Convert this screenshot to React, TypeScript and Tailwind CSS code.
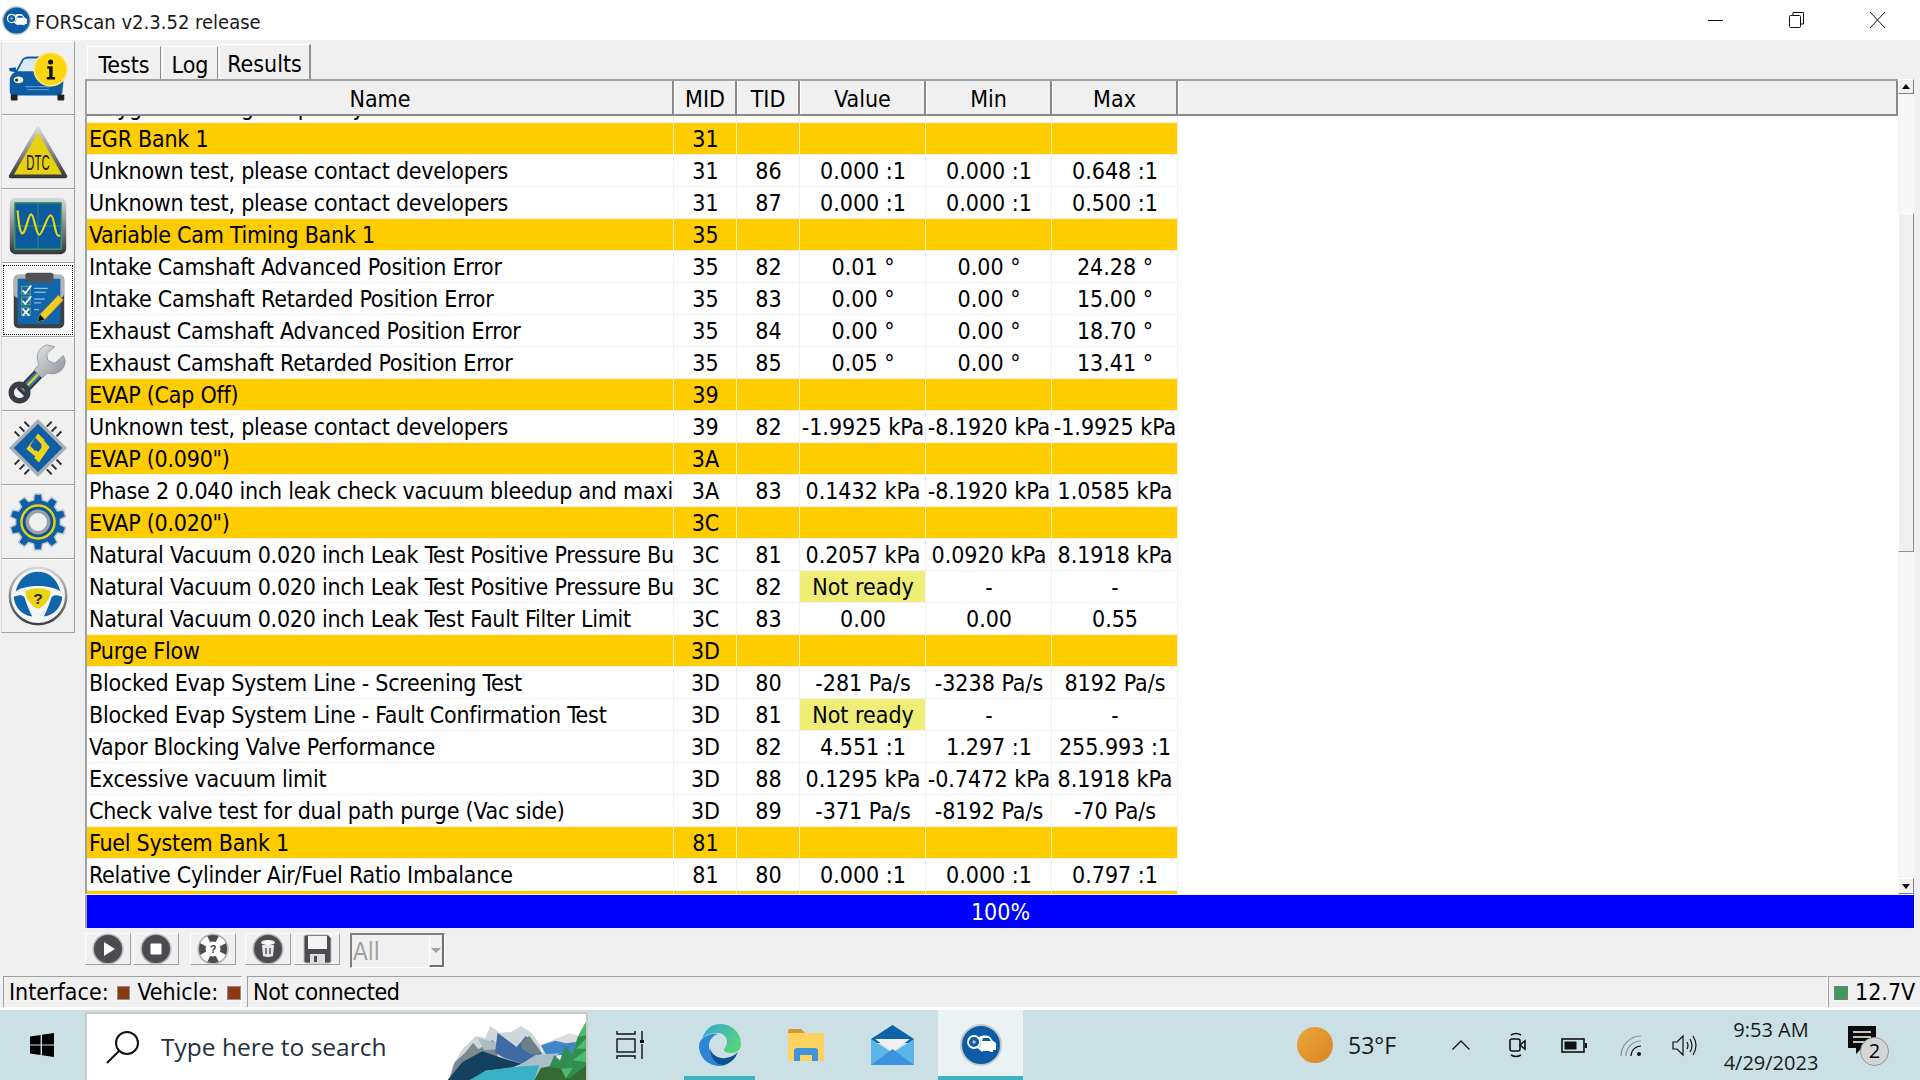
type Row = { name: string; mid: string; tid?: string; value?: string; min?: string; max?: string; group?: boolean }

const data: Row[] = [
  { name: 'Oxygen Sensing Frequency', mid: '', tid: '' },
  { name: 'EGR Bank 1', mid: '31', group: true },
  { name: 'Unknown test, please contact developers', mid: '31', tid: '86', value: '0.000 :1', min: '0.000 :1', max: '0.648 :1' },
  { name: 'Unknown test, please contact developers', mid: '31', tid: '87', value: '0.000 :1', min: '0.000 :1', max: '0.500 :1' },
  { name: 'Variable Cam Timing Bank 1', mid: '35', group: true },
  { name: 'Intake Camshaft Advanced Position Error', mid: '35', tid: '82', value: '0.01 °', min: '0.00 °', max: '24.28 °' },
  { name: 'Intake Camshaft Retarded Position Error', mid: '35', tid: '83', value: '0.00 °', min: '0.00 °', max: '15.00 °' },
  { name: 'Exhaust Camshaft Advanced Position Error', mid: '35', tid: '84', value: '0.00 °', min: '0.00 °', max: '18.70 °' },
  { name: 'Exhaust Camshaft Retarded Position Error', mid: '35', tid: '85', value: '0.05 °', min: '0.00 °', max: '13.41 °' },
  { name: 'EVAP (Cap Off)', mid: '39', group: true },
  { name: 'Unknown test, please contact developers', mid: '39', tid: '82', value: '-1.9925 kPa', min: '-8.1920 kPa', max: '-1.9925 kPa' },
  { name: 'EVAP (0.090")', mid: '3A', group: true },
  { name: 'Phase 2 0.040 inch leak check vacuum bleedup and maximum', mid: '3A', tid: '83', value: '0.1432 kPa', min: '-8.1920 kPa', max: '1.0585 kPa' },
  { name: 'EVAP (0.020")', mid: '3C', group: true },
  { name: 'Natural Vacuum 0.020 inch Leak Test Positive Pressure Build', mid: '3C', tid: '81', value: '0.2057 kPa', min: '0.0920 kPa', max: '8.1918 kPa' },
  { name: 'Natural Vacuum 0.020 inch Leak Test Positive Pressure Build', mid: '3C', tid: '82', value: 'Not ready', min: '-', max: '-' },
  { name: 'Natural Vacuum 0.020 inch Leak Test Fault Filter Limit', mid: '3C', tid: '83', value: '0.00', min: '0.00', max: '0.55' },
  { name: 'Purge Flow', mid: '3D', group: true },
  { name: 'Blocked Evap System Line - Screening Test', mid: '3D', tid: '80', value: '-281 Pa/s', min: '-3238 Pa/s', max: '8192 Pa/s' },
  { name: 'Blocked Evap System Line - Fault Confirmation Test', mid: '3D', tid: '81', value: 'Not ready', min: '-', max: '-' },
  { name: 'Vapor Blocking Valve Performance', mid: '3D', tid: '82', value: '4.551 :1', min: '1.297 :1', max: '255.993 :1' },
  { name: 'Excessive vacuum limit', mid: '3D', tid: '88', value: '0.1295 kPa', min: '-0.7472 kPa', max: '8.1918 kPa' },
  { name: 'Check valve test for dual path purge (Vac side)', mid: '3D', tid: '89', value: '-371 Pa/s', min: '-8192 Pa/s', max: '-70 Pa/s' },
  { name: 'Fuel System Bank 1', mid: '81', group: true },
  { name: 'Relative Cylinder Air/Fuel Ratio Imbalance', mid: '81', tid: '80', value: '0.000 :1', min: '0.000 :1', max: '0.797 :1' },
  { name: '', mid: '', group: true },
]

function gearPath(cx: number, cy: number, ro: number, ri: number, n: number) {
  let d = ''
  const step = (Math.PI * 2) / n
  for (let i = 0; i < n; i++) {
    const a = i * step - Math.PI / 2
    const pts = [
      [ri, a - step * 0.32],
      [ro, a - step * 0.2],
      [ro, a + step * 0.2],
      [ri, a + step * 0.32],
    ]
    pts.forEach(([r, t], j) => {
      d += `${i === 0 && j === 0 ? 'M' : 'L'}${(cx + r * Math.cos(t)).toFixed(1)} ${(cy + r * Math.sin(t)).toFixed(1)}`
    })
  }
  return d + 'Z'
}

function CarInfoIcon() {
  return (
    <svg width="74" height="74" viewBox="0 2 74 74">
      <path d="M14 32 L20 21 Q22 17 28 17 L46 17 L56 30 L62 36 Q63 38 63 44 L62 54 Q61 57 58 57 L12 57 Q8 57 8 53 L8 41 Q8 36 13 33Z" fill="#0c5ba3" />
      <path d="M16 32 L22 21 Q23 19 28 19 L40 19 L40 32Z" fill="#d7e9f5" />
      <path d="M7 29 L14 28 L15 33 L8 32Z" fill="#0c5ba3" />
      <ellipse cx="17" cy="41" rx="5" ry="3.5" fill="#f5f0c8" />
      <circle cx="15" cy="41" r="1.6" fill="#1b2e45" />
      <path d="M24 48 H50 M26 51 H48" stroke="#6ea8d5" strokeWidth="1" />
      <rect x="9" y="56" width="7" height="6" rx="1" fill="#222" />
      <rect x="57" y="56" width="7" height="6" rx="1" fill="#222" />
      <circle cx="50" cy="30" r="17" fill="#fbd50f" stroke="#fde98a" strokeWidth="1.5" />
      <circle cx="50" cy="22.5" r="2.6" fill="#111" />
      <path d="M46.5 27 H52 V38 H54.5 V40.5 H46 V38 H48.5 V29.5 H46.5Z" fill="#111" />
    </svg>
  )
}

function DtcIcon() {
  return (
    <svg width="74" height="74" viewBox="0 0 74 74">
      <defs>
        <linearGradient id="dtcEdge" x1="0" y1="0" x2="0" y2="1">
          <stop offset="0" stopColor="#d8d8d8" />
          <stop offset="1" stopColor="#36363e" />
        </linearGradient>
      </defs>
      <path d="M37 13 L65 62 L9 62Z" fill="#e6d10f" stroke="url(#dtcEdge)" strokeWidth="4" strokeLinejoin="round" />
      <text x="37" y="56" textAnchor="middle" fontSize="23" fontFamily="'Liberation Sans'" fill="#1a1a1a" textLength="24" lengthAdjust="spacingAndGlyphs">DTC</text>
    </svg>
  )
}

function ScopeIcon() {
  return (
    <svg width="74" height="74" viewBox="0 0 74 74">
      <defs>
        <linearGradient id="scopeEdge" x1="0" y1="0" x2="0" y2="1">
          <stop offset="0" stopColor="#d5dbdf" />
          <stop offset="1" stopColor="#33363c" />
        </linearGradient>
      </defs>
      <rect x="8" y="8" width="58" height="58" rx="6" fill="url(#scopeEdge)" />
      <rect x="13" y="13" width="48" height="48" rx="1" fill="#0d5b9f" stroke="#3e9a63" strokeWidth="1.5" />
      <path d="M37 13 V61 M13 37 H61" stroke="#3e9a63" strokeWidth="0.8" />
      <path d="M16 21 C18 44 20 46 22 44 C26 38 27 25 30 25 C33 25 35 46 38 46 C42 46 46 26 50 26 C54 26 54 47 58 47 L60 47" fill="none" stroke="#e8d711" strokeWidth="2.2" />
    </svg>
  )
}

function ClipboardIcon() {
  return (
    <svg width="70" height="70" viewBox="0 0 70 70">
      <rect x="10" y="9" width="52" height="55" rx="5" fill="#3d4045" />
      <rect x="10" y="9" width="52" height="24" rx="5" fill="#aeb4b8" />
      <rect x="14" y="13" width="44" height="47" rx="1" fill="#0f66ad" />
      <rect x="22" y="7" width="29" height="10" rx="3" fill="#505256" />
      <rect x="18" y="21" width="9" height="8" fill="none" stroke="#6fa86b" strokeWidth="1" />
      <rect x="18" y="32" width="9" height="8" fill="none" stroke="#6fa86b" strokeWidth="1" />
      <rect x="18" y="43" width="9" height="8" fill="none" stroke="#6fa86b" strokeWidth="1" />
      <path d="M19 25 L22 28 L28 20 M19 36 L22 39 L28 31" fill="none" stroke="#fff" strokeWidth="1.8" />
      <path d="M19 44 L26 51 M26 44 L19 51" stroke="#fff" strokeWidth="1.8" />
      <path d="M31 23 H45 M31 27 H43 M31 34 H42 M31 38 H38 M31 45 H36" stroke="#b8d6ee" strokeWidth="1" />
      <path d="M37 50 L56 30 L61 35 L42 55 L35 57Z" fill="#f0cd22" stroke="#c79a10" strokeWidth="0.8" />
      <path d="M35 57 L37 50 L42 55Z" fill="#111" />
    </svg>
  )
}

function WrenchIcon() {
  return (
    <svg width="74" height="74" viewBox="0 0 74 74">
      <defs>
        <linearGradient id="wrenchHead" x1="0" y1="0" x2="1" y2="1">
          <stop offset="0" stopColor="#e6e8ea" />
          <stop offset="1" stopColor="#8b8f94" />
        </linearGradient>
      </defs>
      <path d="M19 56 L45 29" stroke="#33363b" strokeWidth="11" />
      <path d="M21 54 L44 30" stroke="#2a78bd" strokeWidth="7" />
      <path d="M22 53 L44 30" stroke="#e6cf1a" strokeWidth="2.5" />
      <circle cx="18" cy="56" r="8.5" fill="none" stroke="#3a3d42" strokeWidth="5.5" />
      <path d="M46 7 C37 10 34 19 38 27 L33 33 L41 41 L47 36 C56 39 65 33 65 23 L63 18 L54 26 L47 23 L46 16 L54 9Z" fill="url(#wrenchHead)" stroke="#8a8e93" strokeWidth="0.8" />
    </svg>
  )
}

function ChipIcon() {
  const ticks = [
    [18, 25, 13, 20], [23, 20, 18, 15], [28, 15, 23, 10],
    [46, 15, 51, 10], [51, 20, 56, 15], [56, 25, 61, 20],
    [18, 49, 13, 54], [23, 54, 18, 59], [28, 59, 23, 64],
    [46, 59, 51, 64], [51, 54, 56, 59], [56, 49, 61, 54],
  ]
  return (
    <svg width="74" height="74" viewBox="0 0 74 74">
      {ticks.map((t, i) => (
        <line key={i} x1={t[0]} y1={t[1]} x2={t[2]} y2={t[3]} stroke="#2c2e33" strokeWidth="2" />
      ))}
      <path d="M37 7 L67 37 L37 67 L7 37Z" fill="#a8adb2" stroke="#d8dadc" strokeWidth="1" strokeLinejoin="round" />
      <path d="M37 12 L62 37 L37 62 L12 37Z" fill="#0f5fa6" />
      <path d="M37 22 L44 29 L33 38 L40 43 L36 47 L25 38Z" fill="#efd21a" />
      <path d="M40 26 L49 36 L38 52 L33 47 L41 36 L36 30Z" fill="#efd21a" />
      <path d="M34 26 L41 34 L34 40 L29 35Z" fill="#0f5fa6" />
    </svg>
  )
}

function GearIcon() {
  return (
    <svg width="74" height="74" viewBox="0 0 74 74">
      <path d={gearPath(37, 37, 29, 23, 10)} fill="#0f5fa6" stroke="#b9c6d0" strokeWidth="1.5" strokeLinejoin="round" />
      <circle cx="37" cy="37" r="17" fill="#0d5596" stroke="#e8d015" strokeWidth="2.5" />
      <circle cx="37" cy="37" r="11" fill="#f0f0f0" stroke="#9ba0a5" strokeWidth="3.5" />
    </svg>
  )
}

function WheelIcon() {
  return (
    <svg width="74" height="74" viewBox="0 0 74 74">
      <defs>
        <linearGradient id="wheelRing" x1="0" y1="0" x2="0" y2="1">
          <stop offset="0" stopColor="#d3d6d9" />
          <stop offset="1" stopColor="#3b3e44" />
        </linearGradient>
      </defs>
      <circle cx="37" cy="37" r="29" fill="#f4f4f4" stroke="url(#wheelRing)" strokeWidth="2.5" />
      <path d="M14 32 C18 17 28 12 37 12 C46 12 56 17 60 32 C48 25 26 25 14 32Z" fill="#0f66ad" />
      <path d="M12 38 C16 36 20 35 23 38 C25 44 27 50 31 58 C20 57 13 48 12 38Z" fill="#0f66ad" />
      <path d="M62 38 C58 36 54 35 51 38 C49 44 47 50 43 58 C54 57 61 48 62 38Z" fill="#0f66ad" />
      <path d="M24 32 C30 28 44 28 50 32 C50 40 44 47 37 50 C30 47 24 40 24 32Z" fill="#ecd40f" />
      <text x="37" y="45" textAnchor="middle" fontSize="16" fontWeight="700" fontFamily="'Liberation Sans'" fill="#222">?</text>
    </svg>
  )
}

function ForscanIcon({ size }: { size: number }) {
  return (
    <svg width={size} height={size} viewBox="0 0 42 42">
      <circle cx="21" cy="21" r="20" fill="#0c5ca6" stroke="#c4c8cb" strokeWidth="2" />
      <circle cx="14" cy="18" r="6" fill="none" stroke="#fff" strokeWidth="1.8" />
      <path d="M18 23 L23 27" stroke="#fff" strokeWidth="2.4" />
      <path d="M19 13 C22 11 28 11 30 13 L33 17 L36 19 V26 H33 V28 H30 V27 H23 L20 23 L21 18Z" fill="#fff" />
      <path d="M23 14 H29 L31 17 H22Z" fill="#0c5ca6" />
      <path d="M14 16 V20 M12 18 H16" stroke="#cde3f5" strokeWidth="1" />
    </svg>
  )
}

function DiscIcon({ children }: { children: React.ReactNode }) {
  return (
    <svg width="32" height="32" viewBox="0 0 32 32">
      <circle cx="16" cy="16" r="14.8" fill="#4b4c50" stroke="#b5b8ba" strokeWidth="1.6" />
      {children}
    </svg>
  )
}

function ToolButton({ children, className }: { children: React.ReactNode; className: string }) {
  return (
    <div className={`w-[46px] h-[32px] flex items-center justify-center border-t border-l border-t-white border-l-white border-r border-b border-r-[#a0a0a0] border-b-[#a0a0a0] ${className}`}>
      {children}
    </div>
  )
}

function SideButton({ children, active }: { children: React.ReactNode; active?: boolean }) {
  return (
    <div className={`w-[74px] h-[74px] flex items-center justify-center border-t border-l border-t-white border-l-[#dcdcdc] border-r border-b border-r-[#a0a0a0] border-b-[#a0a0a0] ${active ? 'bg-white' : ''}`}>
      {active ? (
        <div className="w-[70px] h-[70px] border border-dotted border-black flex items-center justify-center">{children}</div>
      ) : (
        children
      )}
    </div>
  )
}

function Tab({ label, width, active }: { label: string; width: string; active?: boolean }) {
  return (
    <div className={`${width} flex items-center justify-center border-t border-l border-t-white border-l-white border-r border-r-[#909090] ${active ? 'h-[35px] border-r-2 pt-[4px]' : 'h-[33px] pt-[5px]'}`}>
      {label}
    </div>
  )
}

function HeadCell({ label, width }: { label: string; width: string }) {
  return (
    <div className={`${width} h-full flex items-center justify-center pt-[3px] border-l border-l-white border-r-2 border-r-[#8a8a8a]`}>{label}</div>
  )
}

function TableRow({ row }: { row: Row }) {
  const bg = row.group ? 'bg-[#ffcc00]' : 'bg-white'
  const sep = row.group ? 'border-r-[#fff2c0]' : 'border-r-[#f0f0f0]'
  const cell = `h-full flex items-center justify-center pt-[1px] pl-[1px] whitespace-nowrap overflow-hidden border-r ${sep}`
  const notReady = row.value === 'Not ready'
  return (
    <div className={`flex h-[32px] w-[1091px] border-b border-b-[#f0f0f0] ${bg}`}>
      <div className={`w-[587px] h-full flex items-center pl-[2px] pt-[1px] tracking-[-0.24px] whitespace-nowrap overflow-hidden border-r ${sep}`}>{row.name}</div>
      <div className={`${cell} w-[63px]`}>{row.mid}</div>
      <div className={`${cell} w-[63px]`}>{row.tid}</div>
      <div className={`${cell} w-[126px] ${notReady ? 'bg-[#eeee77]' : ''}`}>{row.value}</div>
      <div className={`${cell} w-[126px]`}>{row.min}</div>
      <div className={`${cell} w-[126px]`}>{row.max}</div>
    </div>
  )
}

function Scrollbar() {
  return (
    <div className="w-[16px] flex flex-col bg-[#f7f7f7]">
      <div className="h-[15px] flex items-center justify-center bg-[#f0f0f0] border-t border-l border-t-white border-l-white border-r border-b border-r-[#808080] border-b-[#808080]">
        <div className="w-0 h-0 border-l-[4px] border-r-[4px] border-b-[5px] border-l-transparent border-r-transparent border-b-black" />
      </div>
      <div className="h-[119px]" />
      <div className="h-[339px] bg-[#f0f0f0] border-t border-l border-t-white border-l-white border-r border-b border-r-[#909090] border-b-[#909090]" />
      <div className="flex-1" />
      <div className="h-[16px] flex items-center justify-center bg-[#f0f0f0] border-t border-l border-t-white border-l-white border-r border-b border-r-[#808080] border-b-[#808080]">
        <div className="w-0 h-0 border-l-[4px] border-r-[4px] border-t-[5px] border-l-transparent border-r-transparent border-t-black" />
      </div>
    </div>
  )
}

function Mountains() {
  return (
    <svg className="w-[157px] h-[66px]" viewBox="0 6 470 198" preserveAspectRatio="none">
      <path d="M60 205 L72 158 L100 112 L140 72 L168 78 L184 42 L212 62 L245 60 L276 42 L306 62 L334 100 L340 205Z" fill="#cfd6d9" />
      <path d="M335 100 L380 80 L420 64 L450 72 L470 100 L470 140 L340 130Z" fill="#dcdcdc" />
      <path d="M335 100 L378 86 L410 94 L440 90 L430 130 L350 128Z" fill="#3f86c8" />
      <path d="M60 205 L76 152 L110 120 L132 92 L148 112 L190 84 L205 100 L205 140 L130 205Z" fill="#7c8a90" />
      <path d="M145 78 L205 92 L205 112 L165 115Z" fill="#aabcc6" />
      <path d="M205 62 L262 105 L275 90 L290 72 L340 126 L280 155 L225 138 L198 122Z" fill="#3f6aa3" />
      <path d="M275 90 L300 72 L338 122 L310 128 L280 112Z" fill="#6d8088" />
      <path d="M55 205 L100 150 L160 118 L225 140 L278 155 L245 168 L170 176 L125 205Z" fill="#14405f" />
      <path d="M270 160 L320 128 L390 124 L360 165 L320 205 L250 205Z" fill="#a9bec9" />
      <path d="M120 205 L170 176 L260 164 L330 160 L315 205Z" fill="#38b0c6" />
      <path d="M315 205 L335 168 L375 160 L470 150 L470 205Z" fill="#346b35" />
      <path d="M360 165 L375 130 L392 145 L410 100 L428 130 L445 75 L470 30 L470 160 L420 200 L395 170Z" fill="#2f8e50" />
      <path d="M445 75 L470 30 L470 70Z M440 110 L470 80 L470 110Z M430 145 L470 115 L470 150Z M395 170 L430 168 L410 200Z" fill="#4cbb6c" />
    </svg>
  )
}

function EdgeIcon() {
  return (
    <svg width="42" height="42" viewBox="0 0 42 42">
      <defs>
        <linearGradient id="edgeTop" x1="0" y1="0" x2="1" y2="0.6">
          <stop offset="0" stopColor="#35a8d6" />
          <stop offset="1" stopColor="#56d27c" />
        </linearGradient>
      </defs>
      <path d="M3 15 C6 5 13 0 21 0 C33 0 42 9 42 20 C42 26 38 29 32 29 C28 29 25 28 25 26 C25 24 28 22 28 18 C28 13 24 9 19 9 C12 9 6 11 3 15Z" fill="url(#edgeTop)" />
      <path d="M3 15 C7 11 14 9 19 10 C12 12 8 19 11 27 C14 36 23 41 30 39 C27 41 24 42 21 42 C9 42 0 33 0 22 C0 19 1 17 3 15Z" fill="#2b86d9" />
      <path d="M11 24 C13 33 23 36 31 33 C34 32 37 30 39 28 C36 36 29 41 23 41 C16 40 11 33 11 24Z" fill="#11508f" />
    </svg>
  )
}

function FolderIcon() {
  return (
    <svg width="36" height="33" viewBox="0 0 36 33">
      <path d="M0 2 Q0 0 2 0 H13 L17 4 V6 H0Z" fill="#d8962e" />
      <rect x="0" y="4" width="36" height="28" rx="1" fill="#fdd25e" />
      <path d="M6 32 V22 Q6 19 9 19 H27 Q30 19 30 22 V32 H24 V26 H12 V32Z" fill="#3f92dc" />
    </svg>
  )
}

function MailIcon() {
  return (
    <svg width="43" height="40" viewBox="0 0 43 40">
      <path d="M0 14 L21.5 0 L43 14 V18 H0Z" fill="#0d63a8" />
      <path d="M4 14 H39 L21.5 27Z" fill="#f0f0f0" />
      <path d="M0 14 L21.5 28 L43 14 V40 H0Z" fill="#5bb5e8" />
      <path d="M0 40 L21.5 24 L43 40Z" fill="#3a93dc" />
    </svg>
  )
}

export default function App() {
  return (
    <div className="w-[1920px] h-[1080px] overflow-hidden flex flex-col bg-[#f0f0f0] text-black text-[23px] font-['DejaVu_Sans_Condensed','Noto_Sans',sans-serif]">
      {/* Title bar */}
      <div className="h-[40px] bg-white flex items-center pl-[2px] relative">
        <ForscanIcon size={29} />
        <span className="ml-[4px] pt-[4px] text-[20px] text-[#1a1a1a]">FORScan v2.3.52 release</span>
        <div className="ml-auto flex items-center gap-[66px] pr-[35px]">
          <svg width="15" height="15" viewBox="0 0 15 15"><path d="M0 7.5 H15" stroke="#111" strokeWidth="1" /></svg>
          <svg width="15" height="16" viewBox="0 0 15 16" fill="none" stroke="#111" strokeWidth="1"><rect x="0.5" y="3.5" width="11" height="12" rx="1" /><path d="M4 3 V0.5 H14.5 V12 H12" /></svg>
          <svg width="15" height="16" viewBox="0 0 15 16" stroke="#111" strokeWidth="1"><path d="M0 0 L15 16 M15 0 L0 16" /></svg>
        </div>
      </div>

      {/* Main area */}
      <div className="h-[936px] flex">
        <div className="w-[75px] pl-[1px] pt-[1px] flex flex-col">
          <SideButton><CarInfoIcon /></SideButton>
          <SideButton><DtcIcon /></SideButton>
          <SideButton><ScopeIcon /></SideButton>
          <SideButton active><ClipboardIcon /></SideButton>
          <SideButton><WrenchIcon /></SideButton>
          <SideButton><ChipIcon /></SideButton>
          <SideButton><GearIcon /></SideButton>
          <SideButton><WheelIcon /></SideButton>
        </div>

        <div className="flex-1 pl-[10px] pr-[6px] flex flex-col">
          <div className="h-[39px] flex items-end pl-[2px] gap-[1px]">
            <Tab label="Tests" width="w-[74px]" />
            <Tab label="Log" width="w-[56px]" />
            <Tab label="Results" width="w-[92px]" active />
          </div>

          <div className="h-[815px] flex">
            <div className="flex-1 min-w-0 flex flex-col border-l-2 border-l-[#a0a0a0]">
              <div className="h-[37px] flex border-t-2 border-t-[#a0a0a0] border-b-2 border-b-[#8a8a8a]">
                <HeadCell label="Name" width="w-[587px]" />
                <HeadCell label="MID" width="w-[63px]" />
                <HeadCell label="TID" width="w-[63px]" />
                <HeadCell label="Value" width="w-[126px]" />
                <HeadCell label="Min" width="w-[126px]" />
                <HeadCell label="Max" width="w-[126px]" />
                <div className="flex-1 h-full border-l border-l-white border-r-2 border-r-[#8a8a8a]" />
              </div>
              <div className="flex-1 min-h-0 overflow-hidden bg-white">
                <div className="-mt-[25px]">
                  {data.map((row, i) => (
                    <TableRow key={i} row={row} />
                  ))}
                </div>
              </div>
            </div>
            <Scrollbar />
          </div>

          <div className="mt-[1px] h-[33px] pt-[2px] bg-[#0000ff] border-l-2 border-l-[#a0a0a0] flex items-center justify-center text-white">100%</div>

          <div className="mt-[5px] h-[35px] flex items-start">
            <ToolButton className="mr-[2px]">
              <DiscIcon><path d="M12 9 L23 16 L12 23Z" fill="#fff" /></DiscIcon>
            </ToolButton>
            <ToolButton className="mr-[11px]">
              <DiscIcon><rect x="10.5" y="10.5" width="11" height="11" rx="1" fill="#fff" /></DiscIcon>
            </ToolButton>
            <ToolButton className="mr-[9px]">
              <DiscIcon>
                <path d="M16 2 A14 14 0 0 1 21 3 L19 9 H13 L11 3 A14 14 0 0 1 16 2Z M16 30 A14 14 0 0 1 11 29 L13 23 H19 L21 29 A14 14 0 0 1 16 30Z" fill="#fff" transform="rotate(45 16 16)" />
                <path d="M16 2 A14 14 0 0 1 21 3 L19 9 H13 L11 3 A14 14 0 0 1 16 2Z M16 30 A14 14 0 0 1 11 29 L13 23 H19 L21 29 A14 14 0 0 1 16 30Z" fill="#fff" transform="rotate(-45 16 16)" />
                <circle cx="16" cy="16" r="7.5" fill="#fff" />
                <text x="16" y="20" textAnchor="middle" fontSize="11" fontWeight="700" fontFamily="'Liberation Sans'" fill="#333">?</text>
              </DiscIcon>
            </ToolButton>
            <ToolButton className="mr-[3px]">
              <DiscIcon>
                <ellipse cx="16" cy="9.5" rx="7" ry="2.5" fill="#fff" />
                <path d="M10 12 H22 L21 23 Q16 25 11 23Z" fill="#e8e8e8" />
                <path d="M14 15 V21 M18 15 V21" stroke="#4b4c50" strokeWidth="1.4" />
              </DiscIcon>
            </ToolButton>
            <ToolButton className="mr-[10px]">
              <svg width="29" height="30" viewBox="0 0 29 30">
                <path d="M1 3 Q1 1 3 1 H25 L28 4 V27 Q28 29 26 29 H3 Q1 29 1 27Z" fill="#4b4c50" stroke="#b5b8ba" strokeWidth="1" />
                <rect x="5" y="2" width="19" height="13" fill="#f4f4f4" />
                <rect x="7" y="20" width="15" height="9" fill="#dcdcdc" />
                <rect x="11" y="22" width="3" height="6" fill="#4b4c50" />
              </svg>
            </ToolButton>
            <div className="w-[95px] h-[35px] flex items-stretch border-t-2 border-l-2 border-t-[#808080] border-l-[#808080] border-b border-r border-b-white border-r-white">
              <div className="flex-1 pl-[1px] pt-[2px] flex items-center text-[#a0a0a0] text-[24px]">All</div>
              <div className="w-[15px] flex items-center justify-center border-l border-l-white border-r-2 border-b-2 border-r-[#707070] border-b-[#707070]">
                <div className="w-0 h-0 border-l-[5px] border-r-[5px] border-t-[5px] border-l-transparent border-r-transparent border-t-[#a0a0a0]" />
              </div>
            </div>
          </div>
        </div>
      </div>

      {/* Status bar */}
      <div className="h-[31px] flex pl-[3px]">
        <div className="w-[239px] flex items-center pl-[5px] pt-[1px] border-t border-l border-t-[#a0a0a0] border-l-[#a0a0a0] border-r border-r-white">
          <span>Interface:</span>
          <span className="w-[14px] h-[14px] ml-[8px] bg-[#8b3a0f] border border-[#8c8c8c]" />
          <span className="ml-[7px]">Vehicle:</span>
          <span className="w-[14px] h-[14px] ml-[9px] bg-[#8b3a0f] border border-[#8c8c8c]" />
        </div>
        <div className="ml-[5px] flex-1 flex items-center pl-[5px] pt-[1px] tracking-[-0.35px] border-t border-l border-t-[#a0a0a0] border-l-[#a0a0a0] border-r border-r-white">Not connected</div>
        <div className="w-[92px] flex items-center pl-[5px] pt-[1px] border-t border-l border-t-[#a0a0a0] border-l-[#a0a0a0]">
          <span className="w-[14px] h-[14px] bg-[#3c9b5a] border border-[#7c7c7c]" />
          <span className="ml-[7px]">12.7V</span>
        </div>
      </div>
      <div className="h-[3px] bg-white" />

      {/* Taskbar */}
      <div className="h-[70px] bg-[#cbe0e5] flex items-stretch font-['Open_Sans',sans-serif]">
        <div className="w-[85px] flex items-center justify-center pr-[2px]">
          <svg width="24" height="24" viewBox="0 0 24 24" fill="#000">
            <path d="M0 3.6 L10.6 2 V11.4 H0Z M12 1.8 L24 0 V11.4 H12Z M0 12.6 H10.6 V22 L0 20.4Z M12 12.6 H24 V24 L12 22.2Z" />
          </svg>
        </div>
        <div className="w-[503px] my-[2px] -mb-[2px] bg-white border-2 border-[#c8c8c8] flex items-center overflow-hidden">
          <svg className="ml-[19px]" width="34" height="34" viewBox="0 0 34 34" fill="none" stroke="#111" strokeWidth="2">
            <circle cx="21" cy="13" r="11" />
            <path d="M13 21 L1 33" />
          </svg>
          <span className="ml-[21px] text-[24.5px] text-[#1f3040] whitespace-nowrap">Type here to search</span>
          <div className="ml-auto flex items-end h-full"><Mountains /></div>
        </div>

        <div className="w-[28px] ml-[28px] flex items-center">
          <svg width="28" height="28" viewBox="0 0 28 28" fill="none" stroke="#111" strokeWidth="1.4">
            <path d="M1 0 V3 H19 V0" />
            <rect x="1" y="8" width="18" height="13" />
            <path d="M1 28 V25 H19 V28" />
            <path d="M26 0 V9 M26 13 V28" />
            <rect x="24" y="9" width="4" height="3" fill="#111" stroke="none" />
          </svg>
        </div>
        <div className="w-[71px] ml-[40px] flex items-center justify-center border-b-4 border-b-[#3ab4c1] pt-[4px]"><EdgeIcon /></div>
        <div className="ml-[33px] flex items-center w-[36px]"><FolderIcon /></div>
        <div className="ml-[47px] flex items-center w-[43px]"><MailIcon /></div>
        <div className="ml-[24px] w-[85px] bg-[#eaf2f4] border-b-4 border-b-[#3ab4c1] flex items-center justify-center pt-[4px]"><ForscanIcon size={42} /></div>

        <div className="ml-auto flex items-center relative">
          <div className="w-[36px] h-[36px] rounded-full bg-gradient-to-br from-[#eaa63a] to-[#d98526]" />
          <span className="ml-[15px] w-[50px] text-[23px] text-[#1a1a1a] whitespace-nowrap">53°F</span>
          <svg className="ml-[54px]" width="18" height="10" viewBox="0 0 18 10" fill="none" stroke="#111" strokeWidth="1.3"><path d="M0.5 9.5 L9 1 L17.5 9.5" /></svg>
          <svg className="ml-[38px]" width="19" height="26" viewBox="0 0 19 26" fill="none" stroke="#111" strokeWidth="1.6">
            <rect x="2" y="7" width="10" height="12" rx="2" />
            <path d="M12 13 L17 9 V17Z" />
            <path d="M3 3 Q8 0 13 3 M3 23 Q8 26 13 23" />
          </svg>
          <svg className="ml-[34px]" width="26" height="15" viewBox="0 0 26 15">
            <rect x="1" y="1" width="22" height="13" fill="none" stroke="#111" strokeWidth="1.6" />
            <rect x="3.5" y="3.5" width="12" height="8" fill="#111" />
            <rect x="24" y="5" width="2" height="5" fill="#111" />
          </svg>
          <svg className="ml-[33px]" width="21" height="21" viewBox="0 0 21 21" fill="none" strokeWidth="1.2">
            <path d="M1 21 A20 20 0 0 1 21 1" stroke="#8a8f92" />
            <path d="M6 21 A15 15 0 0 1 21 6" stroke="#8a8f92" />
            <path d="M11 21 A10 10 0 0 1 21 11" stroke="#111" />
            <circle cx="19" cy="19" r="2" fill="#111" stroke="none" />
          </svg>
          <svg className="ml-[31px]" width="26" height="23" viewBox="0 0 26 23" fill="none" stroke="#111" strokeWidth="1.2">
            <path d="M1 8 H5 L11 2 V21 L5 15 H1Z" />
            <path d="M15 8 Q17 11.5 15 15 M18 5 Q22 11.5 18 18 M21 2 Q27 11.5 21 21" />
          </svg>
          <div className="ml-[20px] w-[106px] pt-[2px] flex flex-col items-center text-[20px] text-[#1a1a1a] leading-[33px]">
            <span>9:53 AM</span>
            <span>4/29/2023</span>
          </div>
          <div className="ml-[24px] mr-[31px] w-[41px] h-[41px] relative">
            <svg className="mt-[1px]" width="28" height="30" viewBox="0 0 28 30">
              <path d="M0 0 H28 V22 H14 L8 28 V22 H0Z" fill="#0a0a0a" />
              <path d="M5 6 H23 M5 11 H23 M5 16 H18" stroke="#fff" strokeWidth="1.4" />
            </svg>
            <div className="absolute left-[12px] top-[12px] w-[29px] h-[29px] rounded-full bg-[#d4d6d6] border border-[#8f9394] flex items-center justify-center text-[20px] text-black">2</div>
          </div>
        </div>
      </div>
    </div>
  )
}
